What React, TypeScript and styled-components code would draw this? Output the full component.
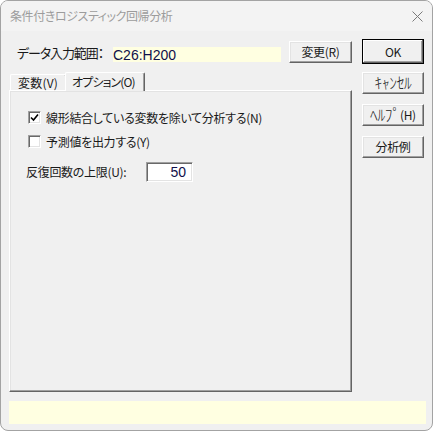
import React from "react";
import styled, { createGlobalStyle, css } from "styled-components";

const GlobalStyle = createGlobalStyle`
  html, body {
    margin: 0;
    padding: 0;
    background: #ffffff;
  }
  body {
    font-family: "Noto Sans CJK JP", "Liberation Sans", sans-serif;
    font-feature-settings: "palt" 1;
    color: #1a1a1a;
  }
  #root {
    width: 433px;
    height: 431px;
  }
`;

const Window = styled.div`
  box-sizing: border-box;
  width: 433px;
  height: 431px;
  border: 1px solid #a3a3a3;
  border-radius: 8px;
  background: #f0f0f0;
  overflow: hidden;
  display: flex;
  flex-direction: column;
`;

const TitleBar = styled.div`
  flex: none;
  height: 30px;
  display: flex;
  align-items: center;
  justify-content: space-between;
  padding: 0 9px 0 9px;
  background: #f3f3f3;
  color: #9c9c9c;
  font-size: 12px;
  letter-spacing: -0.4px;
  line-height: 1;
`;

const Body = styled.div`
  flex: 1;
  display: flex;
  flex-direction: column;
  gap: 9px;
  padding: 0 6px 6px 8px;
`;

const Main = styled.div`
  flex: 1;
  display: flex;
  gap: 10px;
`;

const LeftColumn = styled.div`
  width: 343px;
  display: flex;
  flex-direction: column;
  padding-top: 10px;
`;

const RightColumn = styled.div`
  width: 62px;
  display: flex;
  flex-direction: column;
  padding-top: 8px;
`;

const RangeRow = styled.div`
  height: 22px;
  display: flex;
  align-items: flex-end;
`;

const RangeLabel = styled.span`
  flex: none;
  align-self: center;
  margin-left: 8px;
  width: 96px;
  white-space: nowrap;
  font-size: 13px;
  letter-spacing: -1.1px;
  line-height: 1;
`;

const RangeField = styled.div`
  flex: none;
  width: 168px;
  height: 15px;
  margin-bottom: 1px;
  background: #ffffe1;
  font-family: "Liberation Sans", "Noto Sans", sans-serif;
  font-size: 14px;
  line-height: 16px;
  color: #10104a;
  overflow: hidden;
`;

const Button = styled.button<{ $default?: boolean; $gap?: number }>`
  box-sizing: border-box;
  height: 22px;
  margin-top: ${(p) => p.$gap ?? 0}px;
  padding: 0;
  background: #f0f0f0;
  border: 1px solid;
  border-color: #ffffff #646464 #646464 #ffffff;
  box-shadow: inset -1px -1px 0 #a0a0a0, inset 1px 1px 0 #e3e3e3;
  font-family: inherit;
  font-feature-settings: "palt" 1;
  font-size: 12px;
  letter-spacing: -0.3px;
  line-height: 1;
  color: #1a1a1a;
  ${(p) =>
    p.$default &&
    css`
      height: 25px;
      border-color: #000000;
      box-shadow: inset -1px -1px 0 #646464, inset 1px 1px 0 #ffffff,
        inset -2px -2px 0 #a0a0a0;
    `}
`;

const HalfKana = styled.span`
  font-size: 15.5px;
  font-weight: 300;
  letter-spacing: -0.4px;
  vertical-align: -1px;
`;

const ChangeButton = styled(Button)`
  width: 63px;
  margin-left: auto;
`;

const TabStrip = styled.div`
  margin-top: 9px;
  height: 18px;
  display: flex;
  align-items: flex-end;
  padding-left: 1px;
`;

const Tab = styled.div<{ $active?: boolean; $width: number; $spacing: number }>`
  box-sizing: border-box;
  position: relative;
  width: ${(p) => p.$width}px;
  height: ${(p) => (p.$active ? 19 : 16)}px;
  padding-left: ${(p) => (p.$active ? 6 : 7)}px;
  margin-left: ${(p) => (p.$active ? -2 : 0)}px;
  margin-bottom: ${(p) => (p.$active ? -1 : 0)}px;
  display: flex;
  align-items: center;
  background: #f0f0f0;
  border-top: 1px solid #ffffff;
  border-left: 1px solid #ffffff;
  border-right: 1px solid #646464;
  box-shadow: inset -1px 0 0 #a0a0a0;
  border-radius: 2px 2px 0 0;
  white-space: nowrap;
  font-size: 12px;
  letter-spacing: ${(p) => p.$spacing}px;
  line-height: 1;
  z-index: ${(p) => (p.$active ? 2 : 1)};
`;

const Panel = styled.div`
  flex: 1;
  box-sizing: border-box;
  border: 1px solid;
  border-color: #ffffff #646464 #646464 #ffffff;
  box-shadow: inset -1px -1px 0 #a0a0a0, inset 1px 1px 0 #e3e3e3;
  padding: 20px 0 0 18px;
  display: flex;
  flex-direction: column;
`;

const CheckRow = styled.label<{ $gap?: number }>`
  display: flex;
  align-items: center;
  gap: 5px;
  margin-top: ${(p) => p.$gap ?? 0}px;
  font-size: 12px;
  letter-spacing: -0.3px;
  line-height: 1;
`;

const CheckBox = styled.span`
  box-sizing: border-box;
  width: 13px;
  height: 13px;
  background: #ffffff;
  border: 1px solid;
  border-color: #a0a0a0 #ffffff #ffffff #a0a0a0;
  box-shadow: inset 1px 1px 0 #696969, inset -1px -1px 0 #e3e3e3;
  display: flex;
  align-items: center;
  justify-content: center;
`;

const LimitRow = styled.div`
  display: flex;
  align-items: center;
  margin-top: 14px;
  margin-left: -2px;
`;

const LimitLabel = styled.span`
  width: 120px;
  white-space: nowrap;
  font-size: 12px;
  letter-spacing: -0.3px;
  line-height: 1;
`;

const NumberBox = styled.div`
  box-sizing: border-box;
  width: 47px;
  height: 20px;
  background: #ffffff;
  border: 1px solid;
  border-color: #a0a0a0 #ffffff #ffffff #a0a0a0;
  box-shadow: inset 1px 1px 0 #696969, inset -1px -1px 0 #e3e3e3;
  padding: 0 6px 0 0;
  text-align: right;
  font-family: "Liberation Sans", "Noto Sans", sans-serif;
  font-size: 14px;
  line-height: 18px;
  color: #10104a;
`;

const StatusBar = styled.div`
  height: 23px;
  background: #ffffe1;
`;

const CloseIcon = () => (
  <svg width="11" height="11" viewBox="0 0 11 11">
    <path d="M0.5 0.5 L10.5 10.5 M10.5 0.5 L0.5 10.5" stroke="#7a7a7a" strokeWidth="1" />
  </svg>
);

const CheckMark = () => (
  <svg width="9" height="9" viewBox="0 0 9 9">
    <path d="M1 4.5 L3.5 7 L8 1.5" fill="none" stroke="#000" strokeWidth="1.6" />
  </svg>
);

export default function App() {
  return (
    <>
      <GlobalStyle />
      <Window>
        <TitleBar>
          <span>条件付きロジスティック回帰分析</span>
          <CloseIcon />
        </TitleBar>
        <Body>
          <Main>
            <LeftColumn>
              <RangeRow>
                <RangeLabel>データ入力範囲：</RangeLabel>
                <RangeField>C26:H200</RangeField>
                <ChangeButton>変更(R)</ChangeButton>
              </RangeRow>
              <TabStrip>
                <Tab $width={57} $spacing={0.2}>
                  変数(V)
                </Tab>
                <Tab $active $width={80} $spacing={-0.9}>
                  オプション(O)
                </Tab>
              </TabStrip>
              <Panel>
                <CheckRow>
                  <CheckBox>
                    <CheckMark />
                  </CheckBox>
                  線形結合している変数を除いて分析する(N)
                </CheckRow>
                <CheckRow $gap={11}>
                  <CheckBox />
                  予測値を出力する(Y)
                </CheckRow>
                <LimitRow>
                  <LimitLabel>反復回数の上限(U):</LimitLabel>
                  <NumberBox>50</NumberBox>
                </LimitRow>
              </Panel>
            </LeftColumn>
            <RightColumn>
              <Button $default>OK</Button>
              <Button $gap={8}>
                <HalfKana>ｷｬﾝｾﾙ</HalfKana>
              </Button>
              <Button $gap={10}>
                <HalfKana>ﾍﾙﾌﾟ</HalfKana>(H)
              </Button>
              <Button $gap={10}>分析例</Button>
            </RightColumn>
          </Main>
          <StatusBar />
        </Body>
      </Window>
    </>
  );
}
